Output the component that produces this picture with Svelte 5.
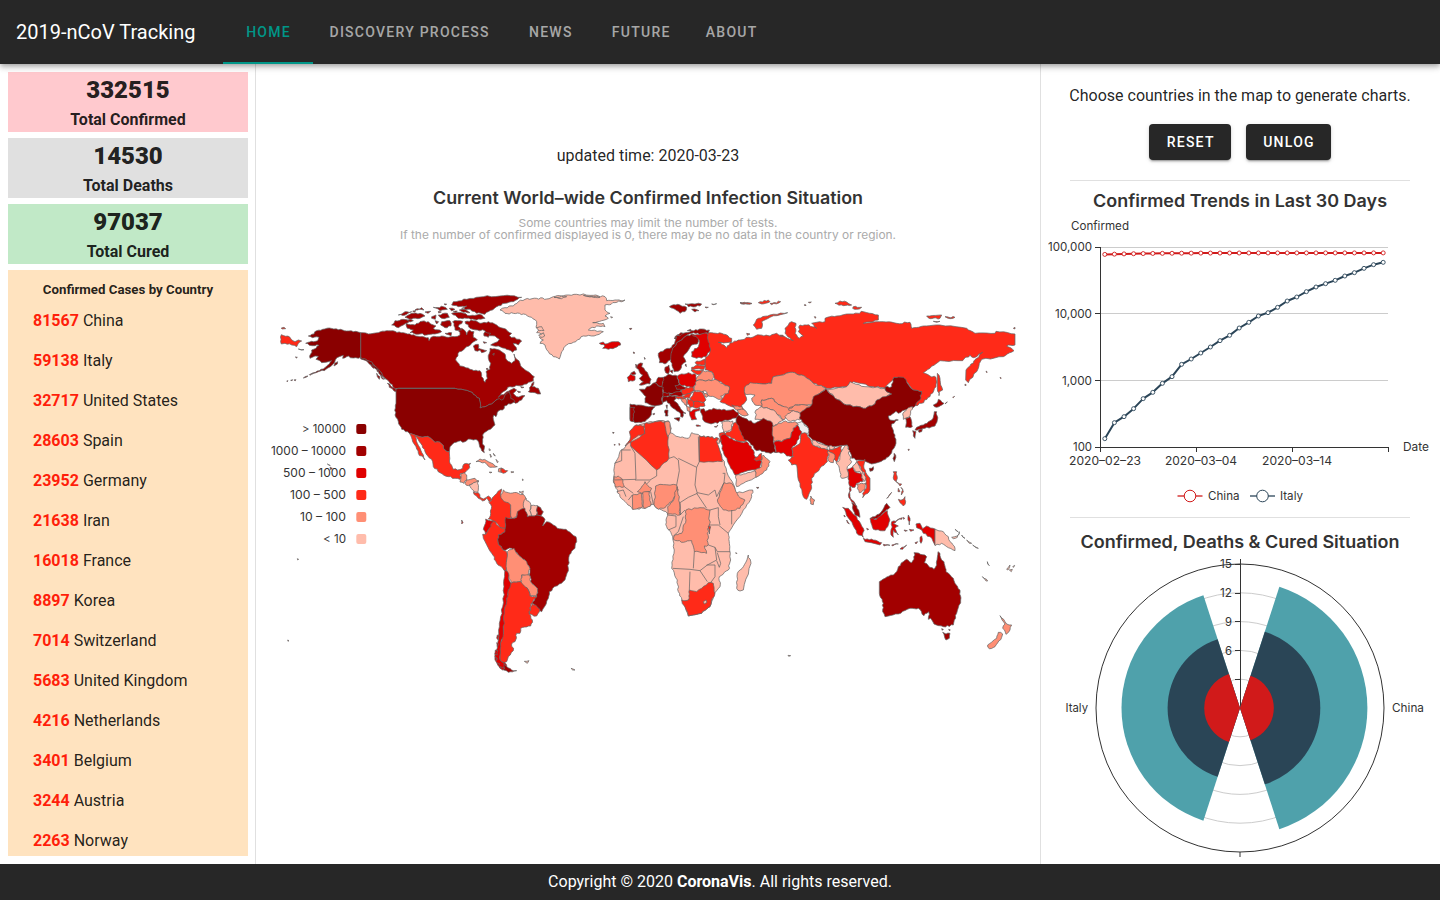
<script>
  const tabs = ['Home', 'Discovery Process', 'News', 'Future', 'About'];
  const totals = [
    { n: 332515, label: 'Total Confirmed', kind: 'confirmed' },
    { n: 14530, label: 'Total Deaths', kind: 'deaths' },
    { n: 97037, label: 'Total Cured', kind: 'cured' }
  ];
  const countries = [
    [81567, 'China'], [59138, 'Italy'], [32717, 'United States'], [28603, 'Spain'],
    [23952, 'Germany'], [21638, 'Iran'], [16018, 'France'], [8897, 'Korea'],
    [7014, 'Switzerland'], [5683, 'United Kingdom'], [4216, 'Netherlands'],
    [3401, 'Belgium'], [3244, 'Austria'], [2263, 'Norway']
  ];

  // Severity scale, highest first
  const scale = ['#8a0000', '#a20000', '#e00000', '#ff2a18', '#ff8f75', '#ffbcab', '#eeeeee'];
  const legend = [
    ['> 10000', 44], ['1000 – 10000', 75], ['500 – 1000', 63],
    ['100 – 500', 56], ['10 – 100', 46], ['< 10', 23]
  ];

  // Adds small deterministic irregularities so coastlines do not look ruled.
  function rough(str) {
    const t = str.split(' ').map((p) => p.split(',').map(Number));
    let out = [];
    for (let i = 0; i < t.length; i++) {
      const a = t[i], b = t[(i + 1) % t.length];
      out.push(a);
      const dx = b[0] - a[0], dy = b[1] - a[1];
      const len = Math.hypot(dx, dy);
      if (len < 9 || (Math.abs(dy) < 2 && len > 90) || (Math.abs(dx) < 2 && len > 30)) continue;
      const n = Math.min(5, Math.floor(len / 6));
      const rev = a[0] + a[1] * 0.37 > b[0] + b[1] * 0.37;
      for (let k = 1; k < n; k++) {
        const f = k / n;
        const x = a[0] + dx * f, y = a[1] + dy * f;
        const s = Math.sin(x * 12.9898 + y * 78.233) * 43758.5453;
        const j = (s - Math.floor(s) - 0.5) * 5 * (rev ? -1 : 1);
        out.push([x - (dy / len) * j, y + (dx / len) * j]);
      }
    }
    return 'M' + out.map((p) => p[0].toFixed(1) + ' ' + p[1].toFixed(1)).join('L') + 'Z';
  }

  // Regions, each in thirds of a pixel from its own origin: [scale index, outline]
  const regions = [
    { x: 740, y: 290, shapes: [
      [3, '-98,130 -85,128 -55,130 -25,145 -25,155 -42,158 -65,157 -48,165 -40,173 -30,158 -22,158 -5,150 0,150 25,142 60,135 90,138 110,130 150,148 160,152 135,130 135,115 155,95 168,100 165,130 178,145 190,138 175,125 180,105 200,105 230,115 215,100 255,95 255,85 290,78 340,72 370,65 415,75 415,90 370,100 430,95 470,100 510,97 515,115 550,108 600,105 680,115 705,130 765,130 768,124 825,132 825,165 800,168 822,182 790,200 725,208 715,235 685,278 677,270 678,240 690,228 710,205 728,187 700,203 690,195 668,212 600,212 570,235 550,248 570,258 588,262 588,290 570,320 545,340 527,347 527,340 545,305 520,300 490,265 462,262 435,295 400,290 340,275 320,290 260,295 220,280 185,255 150,247 100,260 95,280 50,280 15,290 15,310 20,330 5,345 15,365 0,362 -25,350 -60,335 -40,300 -32,290 -75,268 -85,245 -105,240 -105,210 -90,185 -98,150'],
      [3, '40,105 55,85 90,75 143,68 90,82 65,95 65,115 50,118'],
      [3, '285,40 300,33 320,36 335,45 310,47'],
      [3, '340,50 365,52 350,58 338,55'],
      [3, '560,78 605,75 600,85 570,86'],
      [3, '615,80 645,82 630,86'],
      [3, '580,94 600,94 590,97'],
      [3, '592,250 600,265 602,285 608,300 598,305 597,317 592,290'],
      [3, '20,130 30,132 22,136'],
      [3, '120,138 130,140 128,136'],
      [4, '15,290 30,278 50,280 95,280 100,260 150,247 185,255 220,280 258,293 240,310 225,320 218,345 165,345 145,360 120,345 95,325 65,330 65,350 45,345 35,325 45,315 15,312'],
      [4, '65,350 65,330 95,325 120,345 145,355 160,350 170,358 150,375 132,390 100,360'],
      [5, '48,360 65,350 100,360 130,390 100,410 70,388 45,388'],
      [4, '145,360 165,345 215,347 180,370 165,365'],
      [5, '135,380 160,362 185,370 180,390 145,392'],
      [5, '262,298 320,290 330,275 375,290 435,295 440,305 455,310 400,345 370,355 320,345 285,325'],
      [0, '258,295 285,325 320,345 370,355 400,345 410,330 455,312 440,305 435,292 455,290 462,262 490,262 520,300 545,305 540,330 515,355 495,360 475,370 468,364 445,378 450,390 475,390 455,402 465,435 468,460 450,495 430,510 395,522 378,515 355,510 335,505 322,465 270,470 218,450 205,438 205,415 178,385 180,370 215,345 220,320 240,310'],
      [5, '488,372 500,358 518,350 512,370 505,382 490,388'],
      [1, '497,385 510,380 517,410 497,412'],
      [1, '583,365 590,365 592,390 585,408 555,415 525,420 530,412 550,405 565,395 575,390'],
      [1, '518,422 528,425 525,445 520,438'],
      [1, '535,422 547,418 545,425 537,427'],
      [1, '595,328 612,340 590,352 580,345 590,340'],
      [6, '168,400 185,395 205,415 205,430 185,432 178,418'],
      [3, '0,38 35,41 5,42'], [3, '55,38 85,30 90,35 65,42'], [3, '90,40 122,35 95,44'],
      [3, '192,45 197,44 198,47'], [3, '205,37 214,36 210,39'], [3, '223,80 228,81 226,85'],
      [3, '820,115 825,112 825,117'], [3, '615,342 622,336 618,338'], [3, '638,322 644,319 640,323'],
      [3, '738,243 742,246 740,248'], [3, '780,262 784,264 782,266'], [3, '675,282 679,285 675,287']
    ] },
    { x: 600, y: 290, shapes: [
      [1, '175,190 195,178 215,172 225,155 225,140 250,130 275,122 305,117 328,120 325,130 305,132 275,130 255,140 235,155 218,175 215,205 195,222 178,218'],
      [1, '218,175 235,155 255,140 275,132 295,145 292,162 275,165 262,185 250,200 258,215 245,225 240,240 222,245 212,215'],
      [2, '275,132 285,135 305,132 322,130 325,155 332,180 318,200 290,205 275,200 275,185 295,170 298,158 293,145'],
      [1, '232,135 242,128 250,130 240,138'], [1, '222,145 230,140 228,147'], [1, '262,122 272,118 274,123'],
      [1, '115,222 128,220 125,230 132,235 145,255 153,268 150,282 118,285 130,275 118,265 128,255 118,245 110,235'],
      [1, '107,222 112,228 108,233'],
      [1, '92,250 103,244 108,252 98,255'],
      [2, '82,262 92,252 105,258 105,270 85,275'],
      [1, '195,232 207,225 208,245 205,252 197,248'],
      [1, '210,243 218,240 217,250'],
      [0, '190,262 205,253 232,258 238,282 230,290 250,298 232,308 210,310 190,308 185,285'],
      [1, '165,278 175,262 190,262 188,275 185,290 175,288'],
      [0, '118,298 135,298 140,290 150,288 165,278 175,288 190,292 190,312 185,330 188,342 165,348 135,338 138,320'],
      [0, '90,342 115,345 165,350 155,362 150,380 135,395 105,398 90,388'],
      [1, '90,352 104,352 100,372 102,395 90,392'],
      [1, '188,310 208,308 210,318 188,324'],
      [0, '188,322 210,317 232,320 222,332 240,352 258,370 249,369 248,382 242,380 240,368 225,358 212,348 200,332 187,338'],
      [0, '222,385 240,383 237,394'], [0, '195,360 204,360 204,378 196,378'], [0, '198,346 202,345 201,356'],
      [1, '208,312 235,305 252,308 245,318 212,318'],
      [1, '225,287 240,283 260,293 245,301 230,298'],
      [2, '232,258 265,248 288,255 290,282 280,292 260,290 240,283'],
      [3, '290,213 315,208 315,225 292,225 285,218'],
      [3, '275,232 292,225 315,228 312,238 275,238'],
      [3, '273,240 310,240 302,252 288,252'],
      [4, '288,268 310,242 335,245 342,262 335,272 290,272'],
      [4, '282,302 290,272 335,272 345,268 362,280 388,290 385,310 362,318 368,325 355,328 345,322 325,318 315,302 305,305'],
      [3, '245,298 280,292 282,302 270,310 250,315 245,308'],
      [3, '247,318 270,310 280,305 268,325 255,325'],
      [3, '270,325 283,304 308,308 318,330 310,338 280,335'],
      [3, '280,335 312,337 315,348 290,355 278,350'],
      [3, '262,325 280,335 280,350 270,352 262,340'],
      [4, '240,325 258,327 262,345 255,345'], [3, '225,322 245,318 255,325 235,327'],
      [4, '258,345 270,352 270,365 262,362'],
      [2, '268,365 285,358 300,354 298,362 285,366 285,378 290,388 275,390 270,378'],
      [2, '288,405 302,408 290,409'],
      [1, '302,358 312,356 316,364 340,355 365,360 400,358 415,368 415,385 375,390 365,395 340,400 320,398 308,388 305,372'],
      [3, '343,410 354,405 349,412'],
      [4, '395,345 425,350 430,360 410,360'], [4, '412,360 430,358 445,375 435,378 420,372'],
      [4, '308,303 325,318 318,322'],
      [1, '208,50 215,46 240,45 260,52 255,65 240,70 225,58'],
      [1, '255,42 305,42 300,48 265,50'], [1, '275,58 297,62 285,66'],
      [3, '315,51 325,52 318,54'], [3, '335,42 350,41 340,44'], [3, '420,38 455,40 430,42'],
      [1, '158,372 164,370 162,375'], [3, '88,116 95,115 92,118'], [1, '100,187 103,188 102,190'],
      [1, '133,202 136,207 134,208'], [1, '255,225 258,222 259,230'], [1, '38,427 42,428 40,430']
    ] },
    { x: 370, y: 280, shapes: [
      [1, '-28,158 -5,162 10,160 25,158 50,152 75,154 100,158 125,165 150,170 175,173 177,182 183,172 200,170 215,168 235,172 255,170 270,165 265,152 275,145 283,150 290,165 298,150 312,155 310,172 322,180 305,190 285,205 268,215 257,240 270,258 300,268 330,272 335,290 345,307 352,295 348,275 360,268 362,250 355,235 358,220 360,205 380,208 395,215 405,222 410,240 425,250 435,242 432,222 440,238 450,250 460,265 475,275 493,290 490,302 470,312 445,317 420,320 400,335 385,352 410,335 432,325 440,330 430,340 440,350 465,347 455,360 436,370 422,358 403,378 382,358 365,372 330,384 328,355 300,335 255,325 85,325 75,326 60,310 45,295 30,275 15,258 0,245 -15,238 -28,234'],
      [1, '285,125 310,122 330,130 355,125 380,135 400,145 425,160 418,167 455,183 445,195 430,190 440,210 428,217 405,205 385,198 362,195 375,188 388,178 375,168 352,165 345,152 322,150 300,145'],
      [1, '108,130 135,135 150,125 175,125 182,132 198,138 190,145 215,155 195,162 170,165 150,162 120,158 130,150 112,145'],
      [1, '75,122 100,118 120,122 100,135 85,143 65,135'],
      [1, '250,65 290,58 340,50 400,47 455,52 430,65 405,70 380,80 355,95 345,103 320,100 300,88 275,85 290,78 265,80 245,75'],
      [1, '245,100 275,98 300,107 335,105 345,115 320,120 290,115 265,115'],
      [1, '268,90 285,88 300,98 280,97'],
      [1, '85,105 105,95 125,95 110,103'], [1, '105,112 125,100 150,100 165,108 150,115 125,117'],
      [1, '135,90 155,83 162,90'], [1, '190,82 220,80 232,88 210,92'], [1, '205,105 232,100 238,112 215,115'],
      [1, '215,125 240,122 243,138 225,143 212,135'], [1, '248,125 262,122 278,124 265,140 275,150 255,150'],
      [1, '310,198 325,193 325,205 350,212 335,218 330,210 315,212'], [1, '225,160 245,158 243,168'],
      [1, '185,110 198,105 196,118 185,115'], [1, '222,72 230,72 227,75'], [1, '165,96 182,94 174,100'],
      [1, '345,155 362,160 355,172 342,168'], [1, '238,85 255,88 245,93'],
      [1, '195,122 206,125 200,132'], [1, '128,93 138,92 132,97'], [1, '205,94 214,96 206,99'],
      [1, '368,222 373,220 371,226'], [1, '348,266 354,265 352,270'], [1, '340,185 350,188 342,190'],
      [1, '250,95 262,93 258,97'], [1, '112,121 122,118 130,122 120,126'],
      [1, '475,335 483,318 492,305 487,320 505,325 512,342 495,338'],
      [1, '442,333 452,336 446,338'], [1, '452,320 462,322 455,324'],
      [1, '52,310 75,325 85,335 72,333 58,322'], [1, '20,280 30,290 28,298 22,290'],
      [1, '2,245 15,262 10,265 0,252'], [1, '15,262 28,275 22,275'], [1, '32,284 42,298 36,296'],
      [0, '78,328 85,325 255,325 300,335 328,355 330,384 365,372 382,358 400,358 405,345 418,335 422,355 435,365 403,378 403,385 385,393 378,410 372,405 370,418 375,435 355,450 338,465 338,485 343,505 343,518 335,512 328,495 322,480 310,480 295,477 285,485 265,484 252,488 240,500 238,515 225,510 215,492 208,486 195,487 180,473 165,470 143,468 118,460 95,448 85,425 75,405 78,370'],
      [3, '118,460 143,468 165,470 180,473 195,487 208,486 215,492 225,510 238,515 240,550 250,568 262,570 278,565 282,552 302,550 295,568 285,578 272,580 270,598 255,595 235,590 210,578 190,560 188,545 165,515 148,485 135,468 142,490 160,525 165,540 145,520 138,500 128,485'],
      [5, '390,90 405,83 430,78 445,65 465,58 500,55 530,57 550,50 580,47 620,43 670,46 705,50 710,62 735,60 765,60 735,68 705,75 705,90 720,100 705,108 715,115 695,122 668,128 700,130 705,140 680,138 655,150 700,155 680,165 640,168 610,187 590,195 575,215 568,237 550,230 535,215 525,195 510,190 520,180 508,172 520,162 500,158 512,148 498,142 500,125 485,112 460,102 430,100 405,100'],
      [5, '500,145 515,140 522,152 508,152'], [5, '506,165 520,158 524,168 512,172'], [5, '552,52 590,50 575,56'], [5, '640,46 690,52 665,50'],
      [2, '688,190 700,186 705,192 730,185 745,185 752,195 735,203 715,208 698,205 705,198'],
      [5, '722,110 728,112 724,114'], [3, '780,145 785,146 782,149'], [3, '790,216 794,219 791,220'],
      [3, '729,457 732,458 730,460'], [3, '733,492 736,495 733,496'], [3, '747,490 750,494 747,496']
    ] },
    { x: 270, y: 280, shapes: [
      [0, '272,158 250,155 230,153 205,149 178,144 158,148 140,152 132,162 115,168 128,173 147,172 143,182 125,184 107,190 118,196 135,197 147,196 138,205 125,210 122,222 120,235 135,228 145,229 138,238 155,248 175,245 185,242 178,252 165,263 148,272 125,283 145,275 168,268 190,252 196,240 208,230 220,226 218,235 235,228 250,234 272,232 285,236 300,244 320,262 335,280 345,298 332,285 322,268 305,255 290,243 272,237'],
      [0, '192,258 202,252 203,245 194,250'], [0, '100,294 114,288 108,292'], [0, '118,284 128,279 120,286'],
      [0, '50,303 54,302 52,305'], [0, '62,301 68,299 66,302'], [0, '72,300 78,299 76,302'],
      [0, '85,207 102,209 95,210'], [0, '76,231 82,232 80,234'],
      [3, '34,164 60,172 75,185 85,180 95,183 85,190 80,200 65,195 45,190 34,192'],
      [3, '34,144 42,142 47,146 36,147']
    ] },
    { x: 440, y: 440, shapes: [
      [4, '108,65 120,57 140,62 160,72 172,80 150,82 140,72 120,65'],
      [4, '176,86 184,84 184,97 175,95'], [3, '184,84 203,92 190,100 184,97'],
      [4, '148,96 156,97 150,99'], [4, '213,95 222,96 214,98'], [4, '62,118 62,103 72,98 80,105 80,120 72,130 60,126'],
      [4, '80,120 105,115 117,123 100,130 85,137 75,130'], [5, '88,135 115,123 113,157 98,150'],
      [3, '100,155 115,158 120,172 130,177 145,168 155,180 147,185 140,175 128,183 115,175 102,163'],
      [3, '155,180 165,165 185,147 182,165 188,178 205,185 212,195 215,232 198,235 197,265 180,262 165,245 145,237 152,220 155,200 147,188'],
      [4, '182,165 190,150 205,158 235,160 250,163 258,175 252,190 255,205 235,215 230,230 218,238 212,228 212,195 205,188 188,180'],
      [5, '258,175 273,195 270,212 275,228 262,230 252,205 250,190'], [5, '273,197 293,197 290,225 275,228 270,212'],
      [1, '293,198 302,203 310,215 303,228 290,225'],
      [2, '137,237 160,243 162,253 145,270 137,283 130,268'],
      [3, '160,243 180,262 197,265 195,275 175,285 175,310 190,330 200,335 202,370 200,395 170,370 155,340 130,295 128,283 137,283 145,270'],
      [1, '197,232 215,235 230,232 232,215 255,205 262,230 275,228 290,225 303,228 315,238 308,258 320,245 340,255 352,265 378,268 408,290 410,305 405,325 388,345 385,385 375,420 358,432 328,455 325,475 305,515 290,500 275,490 290,470 292,445 272,425 270,390 255,360 235,345 215,325 190,330 175,310 175,285 195,275 197,255'],
      [4, '202,335 222,325 235,345 255,360 270,385 265,405 245,405 242,425 215,428 207,415 200,390'],
      [4, '245,405 268,405 272,425 292,445 288,468 270,468 265,450 242,430'],
      [3, '275,490 300,508 290,528 268,522'],
      [3, '215,428 242,425 265,450 270,468 290,470 272,492 268,522 277,540 272,558 242,565 240,580 230,580 225,605 215,612 220,632 205,650 200,665 192,668 180,660 180,620 190,570 190,520 200,475 207,445'],
      [2, '195,390 203,395 207,420 213,430 205,450 200,475 193,520 190,570 182,620 180,660 195,668 200,675 200,692 180,685 165,660 168,640 175,600 178,550 188,500 192,440'],
      [1, '192,670 215,690 230,692 205,697 190,690'], [2, '172,585 178,587 175,600 170,595'], [2, '166,630 174,632 172,645 164,643'],
      [2, '165,650 172,655 170,662'], [2, '170,668 180,672 175,678'], [2, '180,680 195,684 188,690'], [2, '170,608 176,612 172,620'],
      [5, '253,664 267,662 262,670'], [5, '393,685 405,690 398,690'], [2, '65,240 69,248 65,252'],
      [5, '147,26 152,30 148,32'], [5, '150,42 155,50 152,52'], [5, '160,40 166,48 162,46'], [5, '168,58 175,66 172,68'],
      [5, '247,117 250,119 248,122'], [5, '237,155 250,153 248,162']
    ] },
    { x: 600, y: 410, shapes: [
      [5, '108,45 135,40 165,35 205,32 212,50 210,68 235,80 265,85 275,68 300,78 330,82 355,85 358,100 345,95 365,135 380,185 405,235 408,250 458,240 455,260 430,300 400,345 385,370 388,400 392,450 385,480 358,500 360,530 345,548 330,590 305,610 265,618 250,575 235,545 232,510 215,475 222,430 218,380 200,350 198,330 202,310 185,300 170,295 160,283 130,295 98,298 80,280 60,260 48,235 40,212 45,160 60,125 80,105 100,80'],
      [3, '108,45 133,48 135,70 110,80 92,97 75,108 90,88 88,65'],
      [3, '133,42 165,35 195,35 200,55 205,80 207,145 170,180 92,108 92,97 135,70'],
      [4, '195,35 208,35 212,65 203,80 197,55'],
      [3, '298,78 330,82 355,85 350,95 367,155 298,155'],
      [4, '42,200 55,198 65,205 73,230 45,230'], [4, '112,245 135,215 155,235 150,245 125,250'],
      [4, '97,255 125,250 128,290 98,298'], [4, '128,247 148,245 152,288 132,295'],
      [4, '167,228 180,223 230,225 235,240 215,275 190,295 175,298 162,283'],
      [4, '232,230 238,260 240,315 203,312 203,290 218,275'],
      [4, '258,300 300,293 330,300 328,345 322,370 325,405 313,408 320,430 283,425 275,392 250,397 220,388 222,378 245,370 258,330'],
      [4, '372,218 395,220 408,245 415,258 435,270 420,295 385,303 370,300 352,270'],
      [3, '245,570 265,570 268,540 290,545 325,518 340,520 345,550 330,590 305,610 265,618'],
      [5, '310,575 318,570 321,577 313,582'],
      [5, '445,435 453,460 430,540 420,543 410,535 412,490 430,470'],
      [3, '400,40 420,30 435,60 437,95 420,95 395,85 375,72 395,60'],
      [5, '365,38 398,33 395,58 370,68'], [3, '358,70 375,68 378,78 360,95'],
      [2, '360,80 375,72 400,90 430,98 440,95 460,120 465,140 485,155 480,175 420,190 405,195 385,160 370,125'],
      [5, '408,195 430,192 465,182 470,200 430,220 410,230'],
      [4, '465,182 485,170 485,140 490,135 510,155 500,180 468,202'], [3, '462,148 485,130 485,150 470,153'],
      [5, '470,233 476,232 474,235'], [5, '407,428 411,430 409,432'], [3, '325,348 332,350 328,372']
    ] },
    { x: 740, y: 400, shapes: [
      [0, '-5,45 15,55 45,70 70,55 97,68 100,125 108,158 85,158 60,150 50,152 30,128 15,120 5,105 -3,85 -12,60'],
      [4, '97,80 130,65 165,65 175,75 160,85 150,115 125,125 100,122'],
      [2, '103,125 125,125 150,115 160,85 172,75 185,95 170,130 155,145 158,170 140,168 130,158 108,158'],
      [3, '195,98 210,115 220,135 265,150 262,185 240,205 215,235 215,265 200,298 190,290 175,240 170,195 155,195 145,180 160,170 155,145 180,130 185,100'],
      [3, '265,150 285,145 305,138 300,165 290,185 275,160'], [4, '265,152 285,165 280,188 265,182'],
      [5, '215,120 265,138 262,150 218,135'], [5, '267,138 285,140 282,146 268,147'], [4, '212,288 224,300 220,314 212,312'],
      [5, '295,185 300,165 318,135 325,140 328,165 335,185 322,200 325,230 305,235 298,205 288,185'],
      [2, '322,208 340,200 345,215 365,220 368,245 350,250 345,262 332,258 330,290 345,310 350,320 335,305 325,285 330,260 325,230'],
      [5, '338,198 350,185 360,205 378,230 372,245 360,215 345,215'],
      [3, '350,185 375,178 372,205 390,235 390,270 368,293 368,280 380,258 378,232 362,200'],
      [4, '350,252 378,250 375,270 358,278'], [1, '335,308 350,318 360,352 345,345'],
      [1, '392,355 405,350 418,342 440,310 450,322 435,335 415,358'],
      [2, '390,355 410,358 430,340 442,332 450,360 435,392 400,388'],
      [2, '308,322 325,325 350,350 370,385 370,412 350,400 330,360'],
      [2, '370,415 400,420 425,428 420,435 375,425'],
      [2, '455,365 485,358 487,353 460,370 475,378 465,385 475,405 460,390 460,412 453,405'],
      [2, '430,433 450,436 432,438'], [2, '455,435 475,432 458,438'], [2, '480,447 500,435 488,448'],
      [2, '528,372 540,370 548,386 560,378 585,387 585,435 570,410 550,400 545,390 530,383'],
      [5, '585,387 610,395 625,410 630,425 645,445 645,452 620,440 605,430 585,437'],
      [5, '635,412 652,408 658,395 652,412 640,416'], [5, '645,388 655,396 648,390'],
      [3, '460,215 470,215 472,235 468,245 485,252 480,258 462,240'], [3, '475,298 490,298 495,290 497,305 490,318 480,308'],
      [3, '475,265 480,275 474,275'], [3, '483,262 490,275 484,285 488,270'], [3, '440,295 455,277 445,292'],
      [0, '462,160 467,165 463,185 459,175'], [0, '388,205 400,200 398,212 390,214'],
      [2, '505,345 510,355 508,375 504,360'], [2, '492,390 502,392 495,394'], [2, '508,388 522,390 512,394'],
      [2, '540,412 545,408 547,418 543,430'], [2, '525,428 533,425 528,432'],
      [5, '665,405 675,415 668,410'], [5, '680,420 695,430 688,430'], [5, '698,435 715,445 705,440'],
      [3, '504,148 508,148 506,152'], [3, '50,262 56,263 53,265'], [2, '312,345 316,350 313,350'], [2, '320,360 328,372 322,368'],
      [2, '380,385 386,388 382,390'], [2, '490,352 494,355 491,358']
    ] },
    { x: 860, y: 500, shapes: [
      [1, '58,245 75,235 105,220 115,200 130,185 140,178 155,188 165,165 162,158 195,165 200,170 193,188 222,208 230,195 234,155 240,160 245,180 252,185 258,215 280,235 285,250 300,270 302,300 290,340 280,375 250,380 222,372 212,355 205,358 206,335 192,347 175,325 150,325 115,342 75,350 68,335 70,310 58,280'],
      [1, '248,397 258,402 270,400 268,415 258,420'], [1, '245,386 250,388 247,391'], [1, '266,388 271,390 268,392'],
      [4, '420,347 435,365 440,372 455,375 450,390 438,403 428,385 435,372'],
      [4, '415,397 428,402 425,412 405,440 388,446 383,435 410,415'],
      [5, '367,230 383,243 378,243'], [5, '382,185 388,197 384,192'], [5, '448,210 457,208 454,215'], [5, '458,200 464,196 461,202']
    ] },
    { x: 260, y: 410, shapes: [
      [0, '210,172 217,175 212,179'], [5, '202,162 211,167 205,164'],
      [5, '83,690 87,692 84,694'], [5, '112,446 116,448 113,450'], [5, '1584,736 1592,737 1586,739'],
      [5, '2240,478 2250,465 2244,480']
    ] }
  ];
  const africaBorders = 'M43 210L108 208L105 130L92 108M105 210L150 210L170 198V180M150 212L140 222M207 145L222 140L235 150L238 182L230 225M235 145L290 172L298 155M295 80L298 155M290 172L285 225L292 250L265 262L240 278M290 250L320 295M292 248L325 255L345 240L350 260L372 218L375 190L368 190M330 300L355 293V320L360 345M328 345H355L385 370M395 343V300M325 405L345 412L352 425L390 425M218 475L270 478L300 482L322 465L350 450L345 412M283 425L280 475M270 485L268 540M300 482L322 515M320 465L345 465V500L332 518M352 428L362 460L358 472L350 452M203 315L228 318V350L205 360M240 315L255 300M240 278L242 315M250 320L235 365L220 378M43 160L65 152V120H92M73 230L100 250M50 245L70 240L78 260M97 255L85 270M152 245L160 283';
  const usLine = 'M85 325H255';

  // Trend chart
  const italyY = [776,728,710,686,656,637,610,590,553,537,519,501,482,466,444,427,408,398,382,363,351,335,321,311,301,288,278,265,254,247];
  const italy = italyY.map((v, i) => [1104.8 + i * 9.6, 180 + v / 3]);
  const china = italyY.map((_, i) => [1104.8 + i * 9.6, 252.9 + 1.5 * Math.exp(-i / 5)]);
  const line = (pts) => pts.map((p) => p.join(',')).join(' ');
  const series = [{ c: '#d11b1b', pts: china }, { c: '#2b4558', pts: italy }];
  const yTicks = [['100,000', 247, 44], ['10,000', 313.7, 37], ['1,000', 380.5, 30], ['100', 447, 19]];
  const xTicks = [['2020–02–23', 1105], ['2020–03–04', 1201], ['2020–03–14', 1297]];

  // Polar chart
  function sector(r, side) {
    const a = Math.PI / 10;
    const dx = Math.sin(a) * r * side, dy = Math.cos(a) * r;
    return `M1240 708L${1240 + dx} ${708 - dy}A${r} ${r} 0 0 ${side > 0 ? 1 : 0} ${1240 + dx} ${708 + dy}Z`;
  }
  const sectors = [
    [127.4, 1, '#4fa1ab'], [80.3, 1, '#2a4556'], [33.8, 1, '#d11a1a'],
    [118.5, -1, '#4fa1ab'], [72.4, -1, '#2a4556'], [35.8, -1, '#d11a1a']
  ];
</script>

{#snippet fit(kind, x, y, width, str, anchor = 'start')}
  <text class={kind} {x} {y} text-anchor={anchor} textLength={width} lengthAdjust="spacingAndGlyphs">{str}</text>
{/snippet}

<div class="app">
  <header>
    <div class="brand">2019-nCoV Tracking</div>
    <nav>
      {#each tabs as t, i}<a class:active={i === 0}>{t}</a>{/each}
    </nav>
  </header>

  <main>
    <aside>
      {#each totals as t}
        <section class="total {t.kind}"><strong>{t.n}</strong><span>{t.label}</span></section>
      {/each}
      <section class="list">
        <h4>Confirmed Cases by Country</h4>
        {#each countries as [n, name]}
          <p><b>{n}</b> {name}</p>
        {/each}
      </section>
    </aside>

    <div class="center">
      <p class="updated">updated time: 2020-03-23</p>
      <svg class="world" viewBox="256 180 784 520" width="784" height="520">
        {@render fit('title', 648, 204, 430, 'Current World–wide Confirmed Infection Situation', 'middle')}
        {@render fit('sub', 648, 227, 259, 'Some countries may limit the number of tests.', 'middle')}
        {@render fit('sub', 648, 239, 496, 'If the number of confirmed displayed is 0, there may be no data in the country or region.', 'middle')}
        {#each legend as [label, w], i}
          {@render fit('lab', 346, 433.3 + i * 22, w, label, 'end')}
          <rect x="356.3" y={424 + i * 22} width="10" height="10" rx="2" fill={scale[i]} />
        {/each}
        {#each regions as r}
          <g transform="translate({r.x} {r.y}) scale(.33333)" class="land">
            {#each r.shapes as [s, pts]}<path d={rough(pts)} fill={scale[s]} />{/each}
            {#if r.x === 600 && r.y === 410}<path d={africaBorders} fill="none" />{/if}
            {#if r.x === 370}<path d={usLine} fill="none" />{/if}
          </g>
        {/each}
      </svg>
    </div>

    <div class="right">
      <p class="hint">Choose countries in the map to generate charts.</p>
      <div class="buttons"><button>Reset</button><button>Unlog</button></div>
      <hr />
      <svg viewBox="1041 181 399 336" width="399" height="336">
        {@render fit('title', 1240, 207, 294, 'Confirmed Trends in Last 30 Days', 'middle')}
        {@render fit('lab', 1071, 230, 58, 'Confirmed')}
        <path d="M1100 247.5H1388M1100 313.5H1388M1100 380.5H1388" stroke="#ccc" />
        <path d="M1100.5 247V452M1095 447.5H1388.5M1095 247.5h5M1095 313.5h5M1095 380.5h5M1196.5 447v5M1292.5 447v5M1388.5 447v5" stroke="#333" fill="none" />
        {#each yTicks as [l, y, w]}{@render fit('lab', 1092, y + 4.3, w, l, 'end')}{/each}
        {#each xTicks as [l, x], i}{@render fit('lab', x, 465.3, i === 2 ? 70 : 72, l, 'middle')}{/each}
        {@render fit('lab', 1403, 451.3, 26, 'Date')}
        {#each series as s}
          <polyline points={line(s.pts)} fill="none" stroke={s.c} stroke-width="2" stroke-linejoin="bevel" />
          {#each s.pts as [x, y]}<circle cx={x} cy={y} r="2" fill="#fff" stroke={s.c} stroke-width=".9" />{/each}
        {/each}
        <path d="M1177.5 496h25" stroke="#d11b1b" stroke-width="1.3" /><circle cx="1190" cy="496" r="5.8" fill="#fff" stroke="#d11b1b" />
        {@render fit('lab', 1208, 500.3, 31.5, 'China')}
        <path d="M1250 496h25" stroke="#2b4558" stroke-width="1.3" /><circle cx="1262.5" cy="496" r="5.8" fill="#fff" stroke="#2b4558" />
        {@render fit('lab', 1280, 500.3, 23, 'Italy')}
      </svg>
      <hr />
      <svg viewBox="1041 518 399 346" width="399" height="346">
        {@render fit('title', 1240, 548, 319, 'Confirmed, Deaths & Cured Situation', 'middle')}
        {#each [28.8, 57.6, 86.4, 115.2] as r}<circle cx="1240" cy="708" {r} fill="none" stroke="#ccc" />{/each}
        <circle cx="1240" cy="708" r="144" fill="none" stroke="#333" />
        <path d="M1240.5 559V708M1235 564.5h5M1235 593.5h5M1235 621.5h5M1235 650.5h5M1235 679.5h5" stroke="#333" />
        <path d="M1240 852v5" stroke="#333" />
        {#each sectors as [r, side, c]}<path d={sector(r, side)} fill={c} />{/each}
        {@render fit('lab', 1232, 568.3, 12, '15', 'end')}
        {@render fit('lab', 1232, 597.3, 12, '12', 'end')}
        {@render fit('lab', 1232, 626, 7, '9', 'end')}
        {@render fit('lab', 1232, 655, 7, '6', 'end')}
        {@render fit('lab', 1065.5, 712.3, 22.5, 'Italy')}
        {@render fit('lab', 1392, 712.3, 32, 'China')}
      </svg>
    </div>
  </main>

  <footer>Copyright © 2020&nbsp;<b>CoronaVis</b>. All rights reserved.</footer>
</div>

<style>
  :global(body) { margin: 0; background: #fff; overflow: hidden; }
  .app { width: 1440px; height: 900px; display: flex; flex-direction: column; font-family: Roboto, sans-serif; color: rgba(0, 0, 0, .87); font-size: 16px; }
  header { height: 64px; flex: none; background: #272727; display: flex; color: #fff; z-index: 1; box-shadow: 0 2px 4px -1px rgba(0,0,0,.2), 0 4px 5px rgba(0,0,0,.14), 0 1px 10px rgba(0,0,0,.12); }
  .brand { width: 207px; padding-left: 16px; font-size: 20px; line-height: 64px; white-space: nowrap; }
  nav { display: flex; }
  nav a { box-sizing: border-box; min-width: 90px; padding: 0 15.5px 0 16.5px; height: 64px; line-height: 64px; text-align: center; text-transform: uppercase; font-size: 14px; font-weight: 500; letter-spacing: 1.25px; color: rgba(255,255,255,.6); }
  nav a.active { color: #009688; border-bottom: 2px solid #009688; }
  main { flex: 1; display: flex; min-height: 0; }
  aside { box-sizing: border-box; width: 256px; padding: 8px 7px 8px 8px; border-right: 1px solid #e0e0e0; display: flex; flex-direction: column; gap: 6px; }
  .total { height: 60px; display: flex; flex-direction: column; align-items: center; font-weight: 700; }
  .total strong { font-size: 24px; line-height: 36px; }
  .total span { line-height: 23px; }
  .confirmed { background: #ffc9ce; }
  .deaths { background: #e0e0e0; }
  .cured { background: #c1e9c7; }
  .list { flex: 1; min-height: 0; background: #ffe3bf; overflow: hidden; }
  h4 { margin: 0; padding-top: 8px; font-size: 13.28px; line-height: 23px; text-align: center; }
  .list p { margin: 0 0 0 25px; line-height: 40px; }
  .list b { color: #ff1e0a; }
  .center { width: 784px; display: flex; flex-direction: column; }
  .updated { margin: 80px 0 12px; line-height: 24px; text-align: center; }
  svg { display: block; flex: none; }
  .right { box-sizing: border-box; width: 400px; border-left: 1px solid #e0e0e0; display: flex; flex-direction: column; align-items: center; }
  .hint { margin: 20px 1px 16px 0; line-height: 24px; white-space: nowrap; }
  .buttons { display: flex; gap: 15px; margin: 0 1px 20px 0; }
  button { min-width: 82px; height: 36px; padding: 0 16px 0 17px; border: 0; border-radius: 4px; background: #272727; color: #fff; font: 500 14px Roboto, sans-serif; letter-spacing: 1.25px; text-transform: uppercase; box-shadow: 0 3px 1px -2px rgba(0,0,0,.2), 0 2px 2px rgba(0,0,0,.14), 0 1px 5px rgba(0,0,0,.12); }
  hr { width: 340px; height: 1px; margin: 0 1px 0 0; border: 0; flex: none; background: #e0e0e0; }
  text { font-family: Inter, sans-serif; }
  .title { font-size: 17px; font-weight: 600; fill: #333; }
  .sub { font-size: 11px; fill: #aaa; }
  .lab { font-size: 11.5px; fill: #333; font-weight: 400; }
  .land path { stroke: #666; stroke-width: 2.2; stroke-linejoin: round; }
  footer { height: 36px; flex: none; background: #272727; color: #fff; text-align: center; line-height: 36px; }
</style>
